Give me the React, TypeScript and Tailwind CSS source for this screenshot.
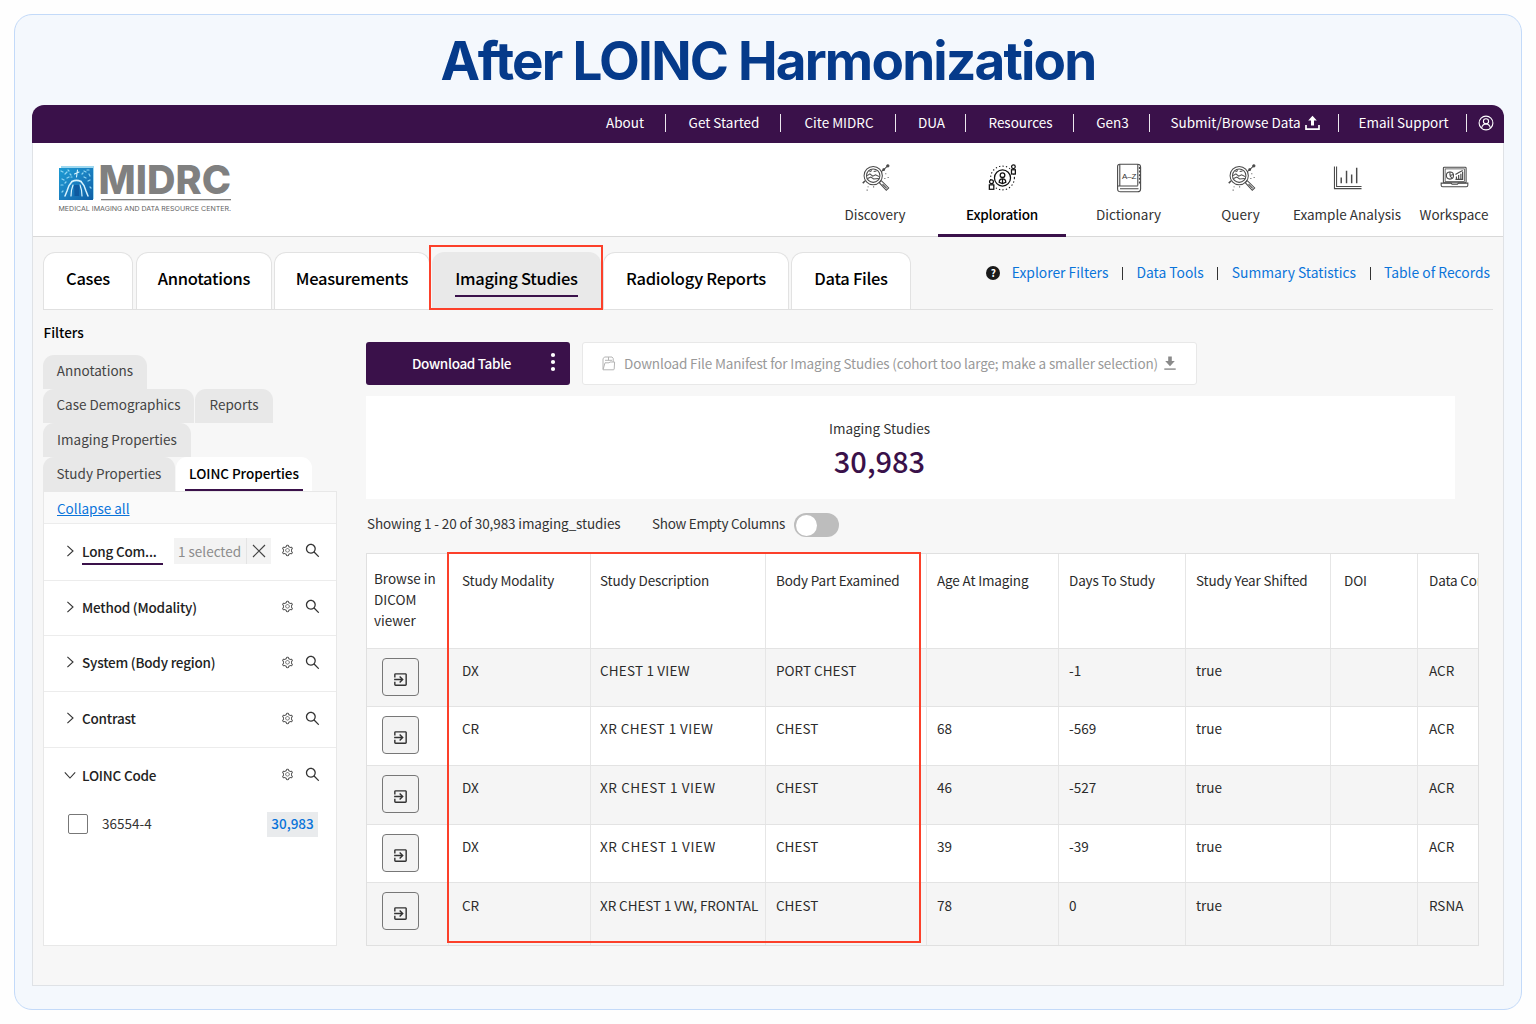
import type { ReactNode } from "react"
import { AiOutlineSearch, AiOutlineSetting } from "react-icons/ai"
import { MdOutlineExitToApp } from "react-icons/md"
import clsx from "clsx"

interface TopLink {
  label: string
  width: string
  icon?: ReactNode
}

interface NavItem {
  label: string
  width: string
  icon: ReactNode
  active?: boolean
}

interface Study {
  modality: string
  description: string
  tracking: string
  bodyPart: string
  age: string
  days: string
  source: string
}

function UploadIcon() {
  return (
    <svg width="15" height="16" viewBox="0 0 15 16" className="-mt-px ml-[4px]">
      <path d="M7.5 0.8 L11.8 5.4 H9 V10.4 H6 V5.4 H3.2 Z" fill="white" />
      <path d="M1 10 V14.2 H14 V10" fill="none" stroke="white" strokeWidth="1.7" />
    </svg>
  )
}

function UserIcon() {
  return (
    <svg width="16" height="16" viewBox="0 0 16 16" fill="none" stroke="white" strokeWidth="1.1">
      <circle cx="8" cy="8" r="6.9" />
      <circle cx="8" cy="6.3" r="2.6" />
      <path d="M3.6 13 C4.2 10.2 5.8 9 8 9 C10.2 9 11.8 10.2 12.4 13" />
    </svg>
  )
}

function MagnifierIcon() {
  return (
    <svg width="28" height="28" viewBox="0 0 30 30" fill="none" stroke="#4a4a4a" strokeWidth="1.1" className="my-px ml-[2px]">
      <circle cx="12" cy="12.5" r="9.8" />
      <circle cx="12" cy="12.5" r="7.2" />
      <path d="M5.5 12.5 L8.5 10.5 L11.5 13 L14.5 11.5 L18.5 13.5 M6 15.5 L9.5 14 L12.5 16 L18 15.5 M8 8.5 L10.5 7 M12.5 8 L15.5 7.5" />
      <path d="M18.5 20 L20.7 17.8 L28.6 25.6 L26 28.2 Z M22 21.5 L26.5 26" />
      <path d="M20.5 8.5 L22.5 6.5 L25 4.5 L27.5 2" />
      <circle cx="27.7" cy="2" r="1.2" fill="#4a4a4a" />
      <circle cx="23.3" cy="6" r="1" fill="#4a4a4a" />
      <path d="M0.8 20.5 L3.5 18" strokeWidth="1.6" />
      <path d="M6.5 24 v1 M5 28 h1 M12 24.5 h1 M27.5 14.5 h1 M25 10.5 h1 M24 15.5 h1" strokeWidth="1.1" />
    </svg>
  )
}

function ExplorationIcon() {
  return (
    <svg width="29" height="29" viewBox="0 0 30 30" fill="none" stroke="#111" strokeWidth="1.3" className="mb-px ml-[1px]">
      <circle cx="15" cy="15.5" r="12.3" strokeWidth="1.1" strokeDasharray="1.3 2.3" />
      <circle cx="15" cy="15.5" r="8.3" />
      <circle cx="15" cy="12.6" r="2.4" />
      <path d="M11.6 20 C11.6 17.4 13 16.3 15 16.3 C17 16.3 18.4 17.4 18.4 20 L15 21.4 Z M15 16.3 V20.6" />
      <rect x="24.3" y="7" width="4" height="4.4" fill="white" />
      <circle cx="26.3" cy="3.9" r="1.9" fill="white" />
      <rect x="1.4" y="22.6" width="4.6" height="4.6" fill="white" />
      <circle cx="3.6" cy="19.4" r="2" fill="white" />
    </svg>
  )
}

function DictionaryIcon() {
  return (
    <svg width="30" height="30" viewBox="0 0 30 30" fill="none" stroke="#4a4a4a" strokeWidth="1.1" className="ml-[2px]">
      <path d="M4.8 1.2 H22.5 C24.6 1.2 25.6 2 25.6 4 V26 C25.6 28 24.6 28.8 22.5 28.8 H5.5 C3.7 28.8 2.6 28 2.6 26 V3.5 C2.6 2 3.4 1.2 4.8 1.2 Z" />
      <path d="M4.8 1.2 V22.5 M22.8 1.2 V22.5 M3 23 H22.8 M5 25.8 H23.5" />
      <path d="M24.6 4 V22" strokeWidth="1.4" strokeDasharray="2 1.6" />
      <text x="7" y="15.6" fontSize="8" textLength="14.4" fill="#333" stroke="none" fontFamily="Liberation Sans, sans-serif">A–Z</text>
    </svg>
  )
}

function ChartIcon() {
  return (
    <svg width="29" height="29" viewBox="0 0 30 30" fill="none" stroke="#4a4a4a" className="mb-px ml-[1px]">
      <path d="M1.5 3.5 V26.5 H29.5 M3.7 3.5 V24.3 H29.5" strokeWidth="1.1" />
      <path d="M8.5 15 V21 M14 8 V21 M19.3 12 V21 M24.5 5 V21" strokeWidth="1.5" />
    </svg>
  )
}

function WorkspaceIcon() {
  return (
    <svg width="29" height="29" viewBox="0 0 30 30" fill="none" stroke="#4a4a4a" strokeWidth="1.1" className="mb-px">
      <rect x="3.5" y="4.3" width="23.5" height="16.2" rx="1" />
      <rect x="5.3" y="6.1" width="19.9" height="13" strokeWidth="0.8" />
      <path d="M1.2 20.8 H11.5 L12.5 22 H18 L19 20.8 H28.8 V23 C28.8 24 28.2 24.5 27.2 24.5 H2.8 C1.8 24.5 1.2 24 1.2 23 Z" />
      <circle cx="10.3" cy="13" r="3.7" />
      <path d="M10.3 13 V9 M10.3 13 L14 12 M10.3 13 L12.5 16" />
      <path d="M16 17 H24 M17 16.5 V14 M19.3 16.5 V12.5 M21.6 16.5 V11 M23.4 16.5 V9 M16 12 L19 10 L23.5 7.8" strokeWidth="1.2" />
    </svg>
  )
}

function ManifestIcon() {
  return (
    <svg width="14" height="15" viewBox="0 0 14 15" fill="none" stroke="#b4b4b4" strokeWidth="1">
      <path d="M1 13.2 V2.5 L2.8 1 H10 L11.2 2.4 V6" />
      <path d="M1 13.8 L3 6.8 H7 L8 6 H12.6 L12.2 13 C12.1 13.6 11.8 13.8 11.2 13.8 Z" />
      <path d="M3 4.3 H10 M6.5 1 V4.3" />
    </svg>
  )
}

function Chevron({ open }: { open?: boolean }) {
  return (
    <svg
      width="14"
      height="14"
      viewBox="0 0 14 14"
      fill="none"
      stroke="#333"
      strokeWidth="1.1"
      className={open ? "rotate-90" : ""}
    >
      <path d="M4.4 1.8 L10 7 L4.4 12.2" />
    </svg>
  )
}

function Logo() {
  return (
    <svg width="184" height="52" viewBox="0 0 184 52" className="overflow-visible">
      <defs>
        <linearGradient id="scan" x1="0" y1="0" x2="1" y2="1">
          <stop offset="0" stopColor="#1c9bd3" />
          <stop offset="0.5" stopColor="#1a7fc0" />
          <stop offset="1" stopColor="#0e5ea5" />
        </linearGradient>
      </defs>
      <rect x="3" y="1" width="33" height="33" fill="#9ed8f0" />
      <rect x="1" y="3" width="34" height="32" fill="url(#scan)" />
      <g fill="none" stroke="#d9f3fd" strokeLinecap="round">
        <path d="M19.5 5 L18.5 12 M16.5 9 L21 7" strokeWidth="1.1" />
        <path d="M14 16.5 C17 15 20 15 23 16.5" strokeWidth="1.6" />
        <path d="M14 16.5 L11 20.5 L9 26 L7 31 M23 16.5 L26 20.5 L28 26 L30 31" strokeWidth="1.5" />
        <path d="M15 20 L13.5 25 L13 31 M22 20 L23.5 25 L24 31" strokeWidth="1.2" />
        <path d="M3 6 l2 1 M7 9 l2 -2 M4 14 l2 1 M10 5 l1 1 M9 13 l2 -1 M26 6 l2 1 M31 9 l1 2 M26 12 l2 1 M30 16 l2 -1 M3 20 l2 0 M32 22 l1 1 M12 9 l1 1 M24 9 l1 -1 M5 26 l-1 1 M29 5 l2 0 M7 18 l1 -1 M13 12 l1 0" strokeWidth="1.2" stroke="#8fd6f3" />
      </g>
      <path d="M16 20 H21.5 L21 31 H16.5 Z" fill="#0b4f95" opacity="0.7" />
      <text x="40.5" y="29" fontSize="39.5" fontWeight="800" textLength="132.5" lengthAdjust="spacingAndGlyphs" fill="#808080" fontFamily="Inter, sans-serif">MIDRC</text>
      <rect x="43" y="34" width="130" height="1.3" fill="#808080" />
      <text x="0.5" y="46" fontSize="6.8" textLength="172.5" lengthAdjust="spacingAndGlyphs" fill="#5f5f5f" fontFamily="Inter, sans-serif">MEDICAL IMAGING AND DATA RESOURCE CENTER.</text>
    </svg>
  )
}

const topLinks: TopLink[] = [
  { label: "About", width: "w-[83px]" },
  { label: "Get Started", width: "w-[115px]" },
  { label: "Cite MIDRC", width: "w-[115px]" },
  { label: "DUA", width: "w-[70px]" },
  { label: "Resources", width: "w-[108px]" },
  { label: "Gen3", width: "w-[76px]" },
  { label: "Submit/Browse Data", width: "w-[189px]", icon: <UploadIcon /> },
  { label: "Email Support", width: "w-[128px]" },
]

const navItems: NavItem[] = [
  { label: "Discovery", width: "w-[126px]", icon: <MagnifierIcon /> },
  { label: "Exploration", width: "w-[128px]", icon: <ExplorationIcon />, active: true },
  { label: "Dictionary", width: "w-[125px]", icon: <DictionaryIcon /> },
  { label: "Query", width: "w-[99px]", icon: <MagnifierIcon /> },
  { label: "Example Analysis", width: "w-[114px]", icon: <ChartIcon /> },
  { label: "Workspace", width: "w-[100px]", icon: <WorkspaceIcon /> },
]

const tabs = [
  { label: "Cases", width: "w-[90px]" },
  { label: "Annotations", width: "w-[136px]" },
  { label: "Measurements", width: "w-[156px]" },
  { label: "Imaging Studies", width: "w-[169px]", active: true },
  { label: "Radiology Reports", width: "w-[186px]" },
  { label: "Data Files", width: "w-[120px]" },
]

const pageLinks = ["Explorer Filters", "Data Tools", "Summary Statistics", "Table of Records"]

const filterTabs = [
  [{ label: "Annotations", width: "w-[104px]" }],
  [{ label: "Case Demographics", width: "w-[151px]" }, { label: "Reports", width: "w-[78px]" }],
  [{ label: "Imaging Properties", width: "w-[148px]" }],
  [
    { label: "Study Properties", width: "w-[132px]" },
    { label: "LOINC Properties", width: "w-[136px]", active: true },
  ],
]

const columns = [
  { label: "Study Modality", pad: "pl-[13px]" },
  { label: "Study Description", pad: "pl-[9px]" },
  { label: "Body Part Examined", pad: "pl-[10px]" },
  { label: "Age At Imaging", pad: "pl-[10px]" },
  { label: "Days To Study", pad: "pl-[10px]" },
  { label: "Study Year Shifted", pad: "pl-[10px]" },
  { label: "DOI", pad: "pl-[13px]" },
  { label: "Data Contributor", pad: "pl-[11px]" },
]

const studies: Study[] = [
  { modality: "DX", description: "CHEST 1 VIEW", tracking: "tracking-[0.2px]", bodyPart: "PORT CHEST", age: "", days: "-1", source: "ACR" },
  { modality: "CR", description: "XR CHEST 1 VIEW", tracking: "tracking-[0.45px]", bodyPart: "CHEST", age: "68", days: "-569", source: "ACR" },
  { modality: "DX", description: "XR CHEST 1 VIEW", tracking: "tracking-[0.6px]", bodyPart: "CHEST", age: "46", days: "-527", source: "ACR" },
  { modality: "DX", description: "XR CHEST 1 VIEW", tracking: "tracking-[0.63px]", bodyPart: "CHEST", age: "39", days: "-39", source: "ACR" },
  { modality: "CR", description: "XR CHEST 1 VW, FRONTAL", tracking: "tracking-[-0.07px]", bodyPart: "CHEST", age: "78", days: "0", source: "RSNA" },
]

const rowHeights = ["h-[58px]", "h-[59px]", "h-[59px]", "h-[58px]", "h-[63px]"]

const gridCols = "grid grid-cols-[82px_142px_175px_161px_132px_127px_145px_87px_61px]"

function TopBar() {
  return (
    <div className="flex h-[38px] items-center justify-end rounded-t-[12px] bg-[#3a114a] pb-[2px] text-white">
      {topLinks.map(link => (
        <div
          key={link.label}
          className={clsx("flex h-[18px] items-center justify-center border-r-[1.5px] border-white/90 pl-[2px]", link.width)}
        >
          <span className="-mt-[3px] leading-[18px]">{link.label}</span>
          {link.icon}
        </div>
      ))}
      <div className="flex w-[37px] justify-center">
        <UserIcon />
      </div>
    </div>
  )
}

function Header() {
  return (
    <div className="flex h-[94px] justify-between border-b border-[#d9d9d9] bg-white">
      <div className="pt-[22px] pl-[25px]">
        <Logo />
      </div>
      <div className="-mr-px flex">
        {navItems.map(item => (
          <div
            key={item.label}
            className={clsx(
              "flex h-[94px] flex-col items-center border-b-[3px] pt-[20px]",
              item.width,
              item.active ? "border-[#3a114a] font-medium tracking-[-0.2px] text-black" : "border-transparent text-[#333]"
            )}
          >
            {item.icon}
            <span className="mt-[11px] leading-5 whitespace-nowrap">{item.label}</span>
          </div>
        ))}
      </div>
    </div>
  )
}

function TabBar() {
  return (
    <div className="mr-[10px] ml-[10px] flex h-[73px] justify-between border-b border-[#e0e0e0]">
      <div className="flex items-end gap-[2px]">
        {tabs.map((tab, i) => (
          <div
            key={tab.label}
            className={clsx(
              "relative flex h-[57px] justify-center rounded-t-[12px] text-[16.5px] leading-6 font-medium tracking-[-0.28px] text-black",
              tab.width,
              i === 0 && "mr-px",
              tab.active ? "bg-[#e9e9e9] pt-[14px]" : "border border-b-0 border-[#e2e2e2] bg-white pt-[13px]"
            )}
          >
            <span className={clsx("h-[31px] whitespace-nowrap", tab.active && "border-b-2 border-[#3a114a]")}>{tab.label}</span>
            {tab.active && <div className="absolute -top-[7px] -right-[2px] -bottom-px -left-[3px] border-2 border-[#fc402a]" />}
          </div>
        ))}
      </div>
      <div className="mt-[25px] flex h-5 items-center gap-[13.5px] pr-[3px] text-[13.85px] leading-5 text-[#0a74da]">
        <span className="mt-px -mr-[2px] flex size-[14px] items-center justify-center rounded-full bg-[#1a1a1a] text-[10px] leading-none font-bold text-white">?</span>
        {pageLinks.map((link, i) => (
          <span key={link} className="flex items-center gap-[13.5px]">
            {i > 0 && <span className="mt-[2px] h-[13px] w-px bg-[#333]" />}
            {link}
          </span>
        ))}
      </div>
    </div>
  )
}

interface FilterRowProps {
  label: string
  height: string
  open?: boolean
  selected?: boolean
}

function FilterRow({ label, height, open, selected }: FilterRowProps) {
  return (
    <div className={clsx("flex items-center pr-[15px] pb-[3px] pl-[19px] text-[#222]", height)}>
      <Chevron open={open} />
      <span className={clsx("ml-[5px] leading-[24px] font-medium tracking-[-0.2px]", selected && "mt-[2px] w-[81px] border-b-2 border-[#3a114a]")}>{label}</span>
      {selected && (
        <div className="ml-[11px] flex h-[26px] w-[97px] items-center bg-[#f3f3f3] leading-[26px] whitespace-nowrap text-[#8c8c8c]">
          <span className="w-[73px] border-r border-[#e4e4e4] pl-[4px]">1 selected</span>
          <svg width="14" height="14" viewBox="0 0 14 14" stroke="#444" strokeWidth="1.2" className="ml-[5px]">
            <path d="M1 1 L13 13 M13 1 L1 13" />
          </svg>
        </div>
      )}
      <AiOutlineSetting className="ml-auto size-[13px] text-[#555]" />
      <AiOutlineSearch className="ml-[10px] size-[17px] text-[#333]" />
    </div>
  )
}

function Sidebar() {
  return (
    <div className="w-[294px]">
      <h2 className="mt-[12px] pl-[0.5px] leading-5 font-medium text-black">Filters</h2>
      <div className="mt-[13px] text-[#444]">
        {filterTabs.map((row, i) => (
          <div key={i} className="flex h-[34px] gap-px">
            {row.map(tab => (
              <div
                key={tab.label}
                className={clsx(
                  "flex h-full justify-center rounded-t-[11px] leading-5 whitespace-nowrap",
                  i < 2 ? "pt-[5px]" : "pt-[6px]",
                  tab.width,
                  tab.active ? "bg-white font-medium text-black" : "bg-[#e8e8e8]"
                )}
              >
                <span className={clsx(tab.active && "h-[28px] border-b-2 border-[#3a114a] px-[4px] tracking-[-0.05px]")}>{tab.label}</span>
              </div>
            ))}
          </div>
        ))}
      </div>
      <div className="h-[455px] divide-y divide-[#ececec] border border-[#e8e8e8] bg-white">
        <div className="h-[32px] bg-[#fafafa] pl-[13px] leading-[33px] text-[#0a74da] underline">Collapse all</div>
        <FilterRow label="Long Com..." height="h-[57px]" selected />
        <FilterRow label="Method (Modality)" height="h-[55px]" />
        <FilterRow label="System (Body region)" height="h-[56px]" />
        <FilterRow label="Contrast" height="h-[56px]" />
        <div>
          <FilterRow label="LOINC Code" height="h-[56px]" open />
          <div className="mt-[7px] flex h-[26px] items-center pr-[18px] pl-[24px]">
            <span className="size-5 rounded-[2px] border border-[#777] bg-white" />
            <span className="-mt-px ml-[14px] text-[#333]">36554-4</span>
            <span className="ml-auto h-[25px] w-[51px] bg-[#e9ebed] text-center leading-[23px] font-medium text-[#0a74da]">30,983</span>
          </div>
        </div>
      </div>
    </div>
  )
}

function StudyTable() {
  return (
    <div className="relative mt-[16px] w-[1113px]">
      <div className="w-full overflow-hidden border border-[#e0e0e0] text-[#2b2b2b]">
        <div className={clsx(gridCols, "h-[94px] bg-white tracking-[-0.15px]")}>
          <div className="border-r border-[#e6e6e6] pt-[14px] pl-[7px] leading-[21px] tracking-normal">Browse in DICOM viewer</div>
          {columns.map(col => (
            <div key={col.label} className={clsx("border-r border-[#e6e6e6] pt-[16px] leading-5 whitespace-nowrap last:border-r-0", col.pad)}>
              {col.label}
            </div>
          ))}
        </div>
        {studies.map((study, i) => (
          <div
            key={i}
            className={clsx(gridCols, "border-t border-[#e3e3e3] leading-5", rowHeights[i], i % 2 === 0 ? "bg-[#f5f5f5]" : "bg-white")}
          >
            <div className="border-r border-[#e6e6e6] pt-[9px] pl-[15px]">
              <button className="flex h-[38px] w-[37px] items-center justify-center rounded-[4px] border border-[#777] bg-[#f3f3f3] pt-[4px]">
                <MdOutlineExitToApp className="size-[17px] text-[#333]" />
              </button>
            </div>
            {[study.modality, study.description, study.bodyPart, study.age, study.days, "true", "", study.source].map((value, c) => (
              <div
                key={c}
                className={clsx(
                  "border-r border-[#e6e6e6] whitespace-nowrap last:border-r-0",
                  i === 4 ? "pt-[12px]" : "pt-[11px]",
                  columns[c].pad,
                  c === 1 && study.tracking
                )}
              >
                {value}
              </div>
            ))}
          </div>
        ))}
      </div>
      {/* Highlighted columns */}
      <div className="absolute top-[-1px] left-[81px] h-[391px] w-[474px] border-2 border-[#fc402a]" />
    </div>
  )
}

function Content() {
  return (
    <div className="ml-[29px] pt-[32px] text-[#333]">
      <div className="flex gap-[12px]">
        <button className="flex h-[43px] w-[204px] items-center rounded-[3px] bg-[#3a114a] pl-[46px] text-white">
          <span className="w-[100px] text-left font-medium tracking-[-0.33px] whitespace-nowrap">Download Table</span>
          <svg width="6" height="20" viewBox="0 0 6 20" fill="white" className="mb-[3px] ml-[38px]">
            <circle cx="3" cy="3" r="2.1" />
            <circle cx="3" cy="10" r="2.1" />
            <circle cx="3" cy="17" r="2.1" />
          </svg>
        </button>
        <button className="flex h-[43px] w-[615px] items-center rounded-[3px] border border-[#e8e8e8] bg-white pl-[19px] whitespace-nowrap text-[#999]">
          <ManifestIcon />
          <span className="ml-[8px] w-[534px] text-left tracking-[-0.13px]">Download File Manifest for Imaging Studies (cohort too large; make a smaller selection)</span>
          <svg width="12" height="15" viewBox="0 0 12 15" fill="#8a8a8a" className="ml-[6px]">
            <path d="M4.2 0.5 H7.8 V5 H10.8 L6 10.2 L1.2 5 H4.2 Z" />
            <rect x="0.3" y="12.4" width="11.4" height="1.4" />
          </svg>
        </button>
      </div>
      <div className="mt-[11px] flex h-[103px] w-[1089px] flex-col items-center bg-white pt-[22px] pr-[62px]">
        <span className="leading-5">Imaging Studies</span>
        <span className="mt-[4px] text-[29px] leading-[36px] font-medium text-[#3a114a]">30,983</span>
      </div>
      <div className="mt-[13px] flex h-[25px] items-center pl-px leading-5">
        <span className="-mt-[3px] w-[285px] tracking-[-0.1px]">Showing 1 - 20 of 30,983 imaging_studies</span>
        <span className="-mt-[3px] w-[142px] tracking-[-0.27px]">Show Empty Columns</span>
        <span className="mt-px flex h-6 w-[45px] items-center rounded-full bg-[#bdbdbd] pl-[1.5px]">
          <span className="size-[21px] rounded-full bg-white" />
        </span>
      </div>
      <StudyTable />
    </div>
  )
}

export default function App() {
  return (
    <div className="h-[1024px] w-[1536px] overflow-hidden bg-[#fefefe] p-[14px] font-['Noto_Sans_CJK_SC','Noto_Sans',sans-serif] text-[13.5px]">
      <div className="h-[996px] w-[1508px] rounded-[18px] border border-[#c3daf9] bg-[#f4f8fd] px-[17px]">
        <h1 className="h-[90px] pt-[14px] text-center font-['Inter',sans-serif] text-[53px] leading-[64px] font-bold tracking-[-1.8px] whitespace-nowrap text-[#053a8a]">
          After LOINC Harmonization
        </h1>
        <div className="w-[1472px]">
          <TopBar />
          <div className="h-[843px] border border-t-0 border-[#dfe2e6] bg-[#f7f7f7]">
            <Header />
            <TabBar />
            <div className="flex pl-[10px]">
              <Sidebar />
              <Content />
            </div>
          </div>
        </div>
      </div>
    </div>
  )
}
